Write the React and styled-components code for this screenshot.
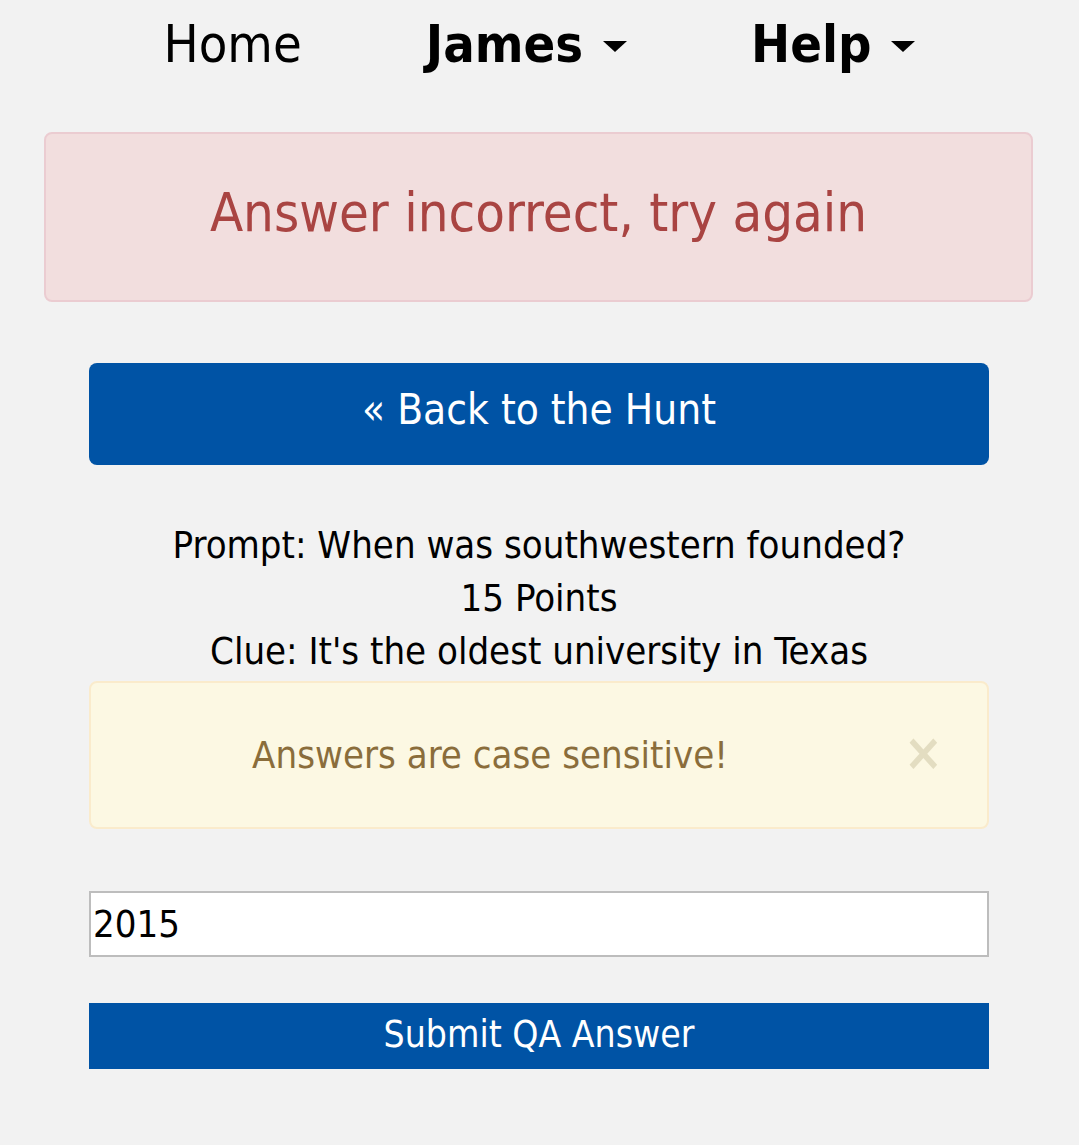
import React from "react";
import styled, { createGlobalStyle } from "styled-components";

const Global = createGlobalStyle`
  html, body { margin: 0; padding: 0; background: #f2f2f2; }
  body { font-family: "DejaVu Sans Condensed", "DejaVu Sans", sans-serif; font-stretch: condensed; color: #000; }
  * { box-sizing: border-box; }
`;

const Nav = styled.nav`
  display: flex;
  justify-content: center;
  align-items: center;
  gap: 124px;
  height: 92px;
  padding-bottom: 4px;
`;

const NavItem = styled.a`
  display: flex;
  align-items: center;
  gap: 20px;
  font-size: 52px;
  font-weight: ${(p) => (p.$bold ? 700 : 400)};
  color: #000;
  text-decoration: none;
`;

const Caret = styled.span`
  width: 0;
  height: 0;
  border-left: 12px solid transparent;
  border-right: 12px solid transparent;
  border-top: 11px solid #000;
  margin-top: 4px;
`;

const Page = styled.main`
  padding: 40px 46px 0 44px;
`;

const Alert = styled.div`
  display: flex;
  align-items: center;
  justify-content: center;
  position: relative;
  border: 2px solid ${(p) => p.$border};
  background: ${(p) => p.$bg};
  color: ${(p) => p.$color};
  border-radius: 8px;
  height: ${(p) => p.$h}px;
  font-size: ${(p) => p.$size}px;
  padding-bottom: ${(p) => p.$pb || 0}px;
`;

const Section = styled.section`
  padding: 61px 90px 0 89px;
  display: flex;
  flex-direction: column;
`;

const BackButton = styled.a`
  display: flex;
  align-items: center;
  justify-content: center;
  height: 102px;
  background: #0053a5;
  color: #fff;
  border-radius: 8px;
  font-size: 42px;
  text-decoration: none;
  padding-bottom: 10px;
`;

const Info = styled.div`
  margin-top: 54px;
  text-align: center;
  font-size: 38px;
  line-height: 53px;
  margin-bottom: 3px;
`;

const WarnText = styled.span`
  margin-right: 98px;
`;

const Close = styled.span`
  position: absolute;
  right: 44px;
  top: 50%;
  transform: translateY(-55%);
  font-size: 52px;
  font-weight: 700;
  color: #e3ddc1;
  line-height: 1;
`;

const Input = styled.input`
  margin-top: 62px;
  height: 66px;
  border: 2px solid #bdbdbd;
  background: #fff;
  font-family: inherit;
  font-stretch: condensed;
  font-size: 38px;
  padding: 0 2px;
  color: #000;
  outline: none;
`;

const Submit = styled.button`
  margin-top: 46px;
  height: 66px;
  border: 0;
  background: #0053a5;
  color: #fff;
  font-family: inherit;
  font-stretch: condensed;
  font-size: 37px;
  padding: 0 0 4px;
  cursor: pointer;
`;

export default function App() {
  return (
    <>
      <Global />
      <Nav>
        <NavItem href="#">Home</NavItem>
        <NavItem href="#" $bold>
          James <Caret />
        </NavItem>
        <NavItem href="#" $bold>
          Help <Caret />
        </NavItem>
      </Nav>
      <Page>
        <Alert $bg="#f2dede" $border="#ebccd1" $color="#a94442" $h={170} $size={54} $pb={10}>
          Answer incorrect, try again
        </Alert>
      </Page>
      <Section>
        <BackButton href="#">« Back to the Hunt</BackButton>
        <Info>
          Prompt: When was southwestern founded?
          <br />
          15 Points
          <br />
          Clue: It's the oldest university in Texas
        </Info>
        <Alert $bg="#fcf8e3" $border="#faebcc" $color="#8a6d3b" $h={148} $size={38}>
          <WarnText>Answers are case sensitive!</WarnText>
          <Close>×</Close>
        </Alert>
        <Input defaultValue="2015" />
        <Submit>Submit QA Answer</Submit>
      </Section>
    </>
  );
}
